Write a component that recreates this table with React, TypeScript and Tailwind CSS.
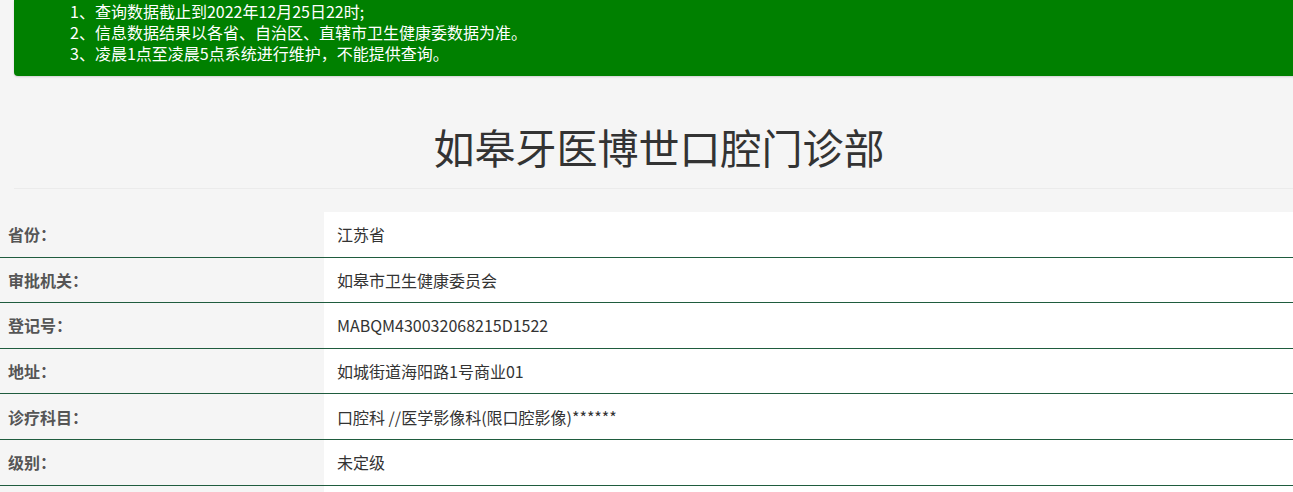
const notices = [
  "1、查询数据截止到2022年12月25日22时;",
  "2、信息数据结果以各省、自治区、直辖市卫生健康委数据为准。",
  "3、凌晨1点至凌晨5点系统进行维护，不能提供查询。",
];

const rows = [
  { label: "省份：", value: "江苏省" },
  { label: "审批机关：", value: "如皋市卫生健康委员会" },
  { label: "登记号：", value: "MABQM430032068215D1522" },
  { label: "地址：", value: "如城街道海阳路1号商业01" },
  { label: "诊疗科目：", value: "口腔科 //医学影像科(限口腔影像)******" },
  { label: "级别：", value: "未定级" },
  { label: "", value: "" },
];

export default function App() {
  return (
    <div
      className="h-[492px] w-[1293px] overflow-hidden bg-[#f5f5f5]"
      style={{ fontFamily: '"Microsoft YaHei", "Noto Sans CJK SC", sans-serif' }}
    >
      <div className="ml-[14px] w-[1290px]">
        <div className="rounded-bl-[4px] bg-[#008000] pl-[56px] pt-[1px] pb-[12px] text-[16px] leading-[21px] text-white shadow-[0_1px_2px_rgba(0,0,0,0.15)]">
          {notices.map((n) => (
            <div key={n}>{n}</div>
          ))}
        </div>
        <div className="flex h-[113px] items-center justify-center border-b border-[#ebebeb]">
          <h1 className="mt-[28px] text-[41px] font-normal leading-none text-[#333]">
            如皋牙医博世口腔门诊部
          </h1>
        </div>
      </div>
      <div className="mt-[23px]">
        {rows.map((r, i) => (
          <div key={i} className="flex h-[45.6px] border-b border-[#1f5c3e]">
            <div className="flex w-[324px] items-center bg-[#f5f5f5] pl-[8px] text-[16px] font-bold text-[#555]">
              {r.label}
            </div>
            <div className="flex flex-1 items-center bg-white pl-[13px] text-[16px] text-[#333]">
              {r.value}
            </div>
          </div>
        ))}
      </div>
    </div>
  );
}
